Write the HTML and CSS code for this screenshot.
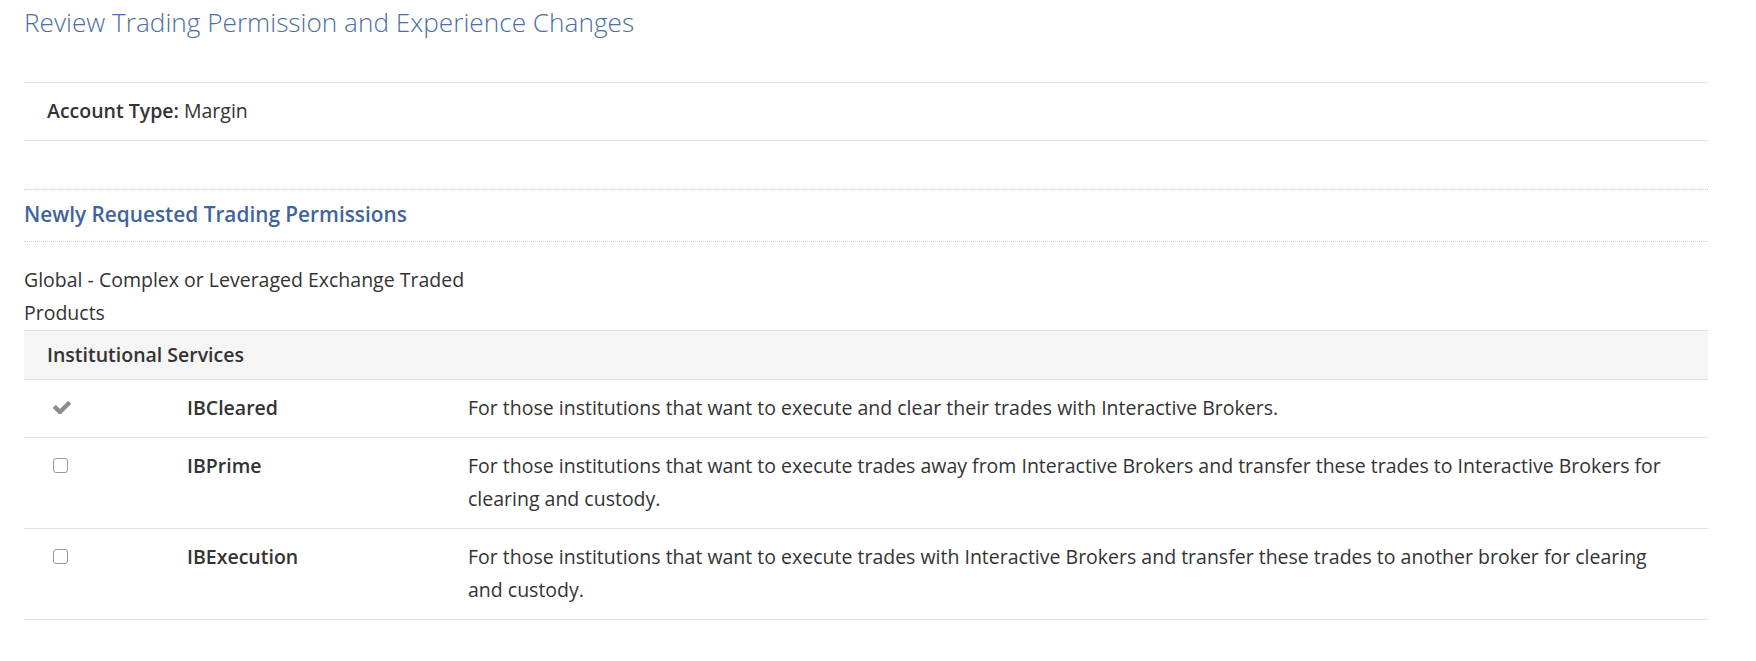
FILE: index.html
```html
<!DOCTYPE html>
<html lang="en">
<head>
    <meta charset="utf-8">
    <meta name="viewport" content="width=device-width, initial-scale=1">
    <title>Review Trading Permission and Experience Changes</title>
    <link rel="stylesheet" href="styles.css">
</head>
<body>
    <div class="page">
        <h1 class="page-title">Review Trading Permission and Experience Changes</h1>

        <div class="account-type">
            <strong>Account Type:</strong> Margin
        </div>

        <section class="perm-section">
            <h2 class="section-title">Newly Requested Trading Permissions</h2>
            <div class="perm-name">Global - Complex or Leveraged Exchange Traded Products</div>

            <table class="perm-table">
                <colgroup>
                    <col class="col-status">
                    <col class="col-name">
                    <col>
                </colgroup>
                <thead>
                    <tr>
                        <th colspan="3">Institutional Services</th>
                    </tr>
                </thead>
                <tbody>
                    <tr>
                        <td class="status">
                            <span class="tick">
                                <svg width="18" height="13" viewBox="110 350 1570 1090"><path d="M1671 566q0 40-28 68l-724 724-136 136q-28 28-68 28t-68-28l-136-136-362-362q-28-28-28-68t28-68l136-136q28-28 68-28t68 28l294 295 656-657q28-28 68-28t68 28l136 136q28 28 28 68z"/></svg>
                            </span>
                        </td>
                        <td class="name">IBCleared</td>
                        <td class="desc">For those institutions that want to execute and clear their trades with Interactive Brokers.</td>
                    </tr>
                    <tr>
                        <td class="status"><span class="tick"><input type="checkbox" class="perm-check"></span></td>
                        <td class="name">IBPrime</td>
                        <td class="desc">For those institutions that want to execute trades away from Interactive Brokers and transfer these trades to Interactive Brokers for clearing and custody.</td>
                    </tr>
                    <tr>
                        <td class="status"><span class="tick"><input type="checkbox" class="perm-check"></span></td>
                        <td class="name">IBExecution</td>
                        <td class="desc">For those institutions that want to execute trades with Interactive Brokers and transfer these trades to another broker for clearing and custody.</td>
                    </tr>
                </tbody>
            </table>
        </section>
    </div>
</body>
</html>
```

FILE: styles.css
```css
body {
    margin: 0;
    background: #fff;
    font-family: "Open Sans", Arial, sans-serif;
    font-size: 19.5px;
    line-height: 33px;
    color: #333;
}
.page {
    padding: 4px 48px 40px 24px;
}
.page-title {
    margin: 0 0 42px;
    font-size: 26.2px;
    line-height: 36px;
    font-weight: 300;
    color: #4a6fa6;
}
.account-type {
    padding: 11px 23px 13px;
    border-top: 1px solid #e3e3e3;
    border-bottom: 1px solid #e3e3e3;
}
.account-type strong {
    font-weight: 600;
}
.perm-section {
    margin-top: 48px;
}
.section-title {
    margin: 0;
    padding: 9px 0 12px;
    font-size: 20.8px;
    line-height: 30px;
    font-weight: 600;
    color: #40649d;
    border-top: 1px dotted #ccc;
    border-bottom: 1px dotted #ccc;
}
.perm-name {
    width: 480px;
    margin-top: 21px;
    padding-bottom: 1px;
}
.perm-table {
    width: 100%;
    table-layout: fixed;
    border-collapse: separate;
    border-spacing: 0;
}
.col-status {
    width: 140px;
}
.col-name {
    width: 281px;
}
.perm-table th {
    padding: 7px 23px 8px;
    text-align: left;
    font-weight: 600;
    background: #f5f5f5;
    border-top: 1px solid #e3e3e3;
    border-bottom: 1px solid #e3e3e3;
}
.perm-table td {
    padding: 11px 23px 13px;
    vertical-align: top;
    border-bottom: 1px solid #e3e3e3;
}
.perm-table td.status {
    padding-left: 29px;
}
.perm-table td.name {
    font-weight: 600;
}
.perm-table td.desc {
    padding-right: 40px;
}
.tick {
    display: flex;
    align-items: center;
    height: 33px;
}
.tick svg {
    fill: #8c8c8c;
}
.perm-check {
    appearance: none;
    width: 15px;
    height: 15px;
    margin: 0;
    border: 1px solid #999;
    border-radius: 3px;
    background: #fff;
}
```
